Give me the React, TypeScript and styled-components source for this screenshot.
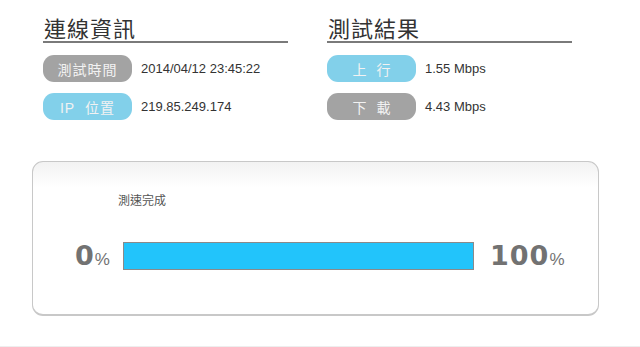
import React from "react";
import styled, { createGlobalStyle } from "styled-components";

const Global = createGlobalStyle`
  html, body { margin: 0; padding: 0; background: #fff; }
  body { font-family: "Liberation Sans", "Noto Sans CJK TC", sans-serif; }
`;

const Page = styled.div`
  width: 640px;
  height: 347px;
  box-sizing: border-box;
  border-bottom: 1px solid #eeeeee;
  padding-top: 14px;
`;

const TopRow = styled.div`
  display: flex;
  gap: 39px;
  padding-left: 43px;
`;

const Column = styled.div`
  width: 245px;
`;

const Heading = styled.h2`
  margin: 0;
  font-family: "Noto Sans CJK TC", sans-serif;
  font-weight: 400;
  font-size: 22px;
  line-height: 26px;
  color: #333;
  padding-left: 1px;
  padding-bottom: 1px;
  border-bottom: 2px solid #7a7a7a;
  letter-spacing: 1px;
`;

const Rows = styled.div`
  display: flex;
  flex-direction: column;
  gap: 11px;
  margin-top: 12px;
`;

const Row = styled.div`
  display: flex;
  align-items: center;
  gap: 9px;
`;

const Pill = styled.div<{ $tone: "gray" | "blue" }>`
  width: 89px;
  height: 27px;
  border-radius: 11px;
  background: ${(p) => (p.$tone === "gray" ? "#a3a3a3" : "#82d0ea")};
  color: #f2f2f2;
  display: flex;
  align-items: center;
  justify-content: center;
  font-family: "Liberation Sans", "Noto Sans CJK TC", sans-serif;
  font-size: 14px;
  letter-spacing: 1px;
  box-sizing: border-box;
`;

const Wide = styled.span`
  letter-spacing: 10px;
  margin-right: -10px;
`;

const Value = styled.span`
  font-family: "Liberation Sans", sans-serif;
  font-size: 13px;
  color: #333;
`;

const Box = styled.div`
  margin: 41px 0 0 32px;
  width: 567px;
  height: 155px;
  box-sizing: border-box;
  border: 1.5px solid #c8c8c8;
  border-bottom-width: 2px;
  border-radius: 11px;
  background: linear-gradient(#f2f2f2 0px, #ffffff 26px);
  padding-top: 31px;
`;

const Status = styled.div`
  font-family: "Noto Sans CJK TC", sans-serif;
  font-size: 12px;
  color: #555;
  line-height: 14px;
  margin-left: 85px;
`;

const ProgressRow = styled.div`
  display: flex;
  align-items: center;
  margin-top: 33px;
  padding-left: 42px;
`;

const Percent = styled.div<{ $side: "left" | "right" }>`
  font-family: "DejaVu Sans", sans-serif;
  font-weight: 700;
  font-size: 27px;
  color: #727272;
  letter-spacing: 1px;
  width: ${(p) => (p.$side === "left" ? "48px" : "auto")};
  margin-left: ${(p) => (p.$side === "left" ? "0" : "16px")};
  white-space: nowrap;
  small {
    font-family: "Liberation Sans", sans-serif;
    font-size: 17px;
    font-weight: 400;
    letter-spacing: 0;
  }
`;

const Track = styled.div`
  width: 351px;
  height: 28px;
  box-sizing: border-box;
  border: 1.5px solid #8a8a8a;
  background: #fff;
`;

const Fill = styled.div`
  height: 100%;
  background: #22c4fb;
`;

export default function App() {
  const progress = 100;
  return (
    <>
      <Global />
      <Page>
        <TopRow>
          <Column>
            <Heading>連線資訊</Heading>
            <Rows>
              <Row>
                <Pill $tone="gray">測試時間</Pill>
                <Value>2014/04/12 23:45:22</Value>
              </Row>
              <Row>
                <Pill $tone="blue">IP&nbsp;&nbsp;位置</Pill>
                <Value>219.85.249.174</Value>
              </Row>
            </Rows>
          </Column>
          <Column>
            <Heading>測試結果</Heading>
            <Rows>
              <Row>
                <Pill $tone="blue"><Wide>上行</Wide></Pill>
                <Value>1.55 Mbps</Value>
              </Row>
              <Row>
                <Pill $tone="gray"><Wide>下載</Wide></Pill>
                <Value>4.43 Mbps</Value>
              </Row>
            </Rows>
          </Column>
        </TopRow>
        <Box>
          <Status>測速完成</Status>
          <ProgressRow>
            <Percent $side="left">0<small>%</small></Percent>
            <Track>
              <Fill style={{ width: `${progress}%` }} />
            </Track>
            <Percent $side="right">100<small>%</small></Percent>
          </ProgressRow>
        </Box>
      </Page>
    </>
  );
}
